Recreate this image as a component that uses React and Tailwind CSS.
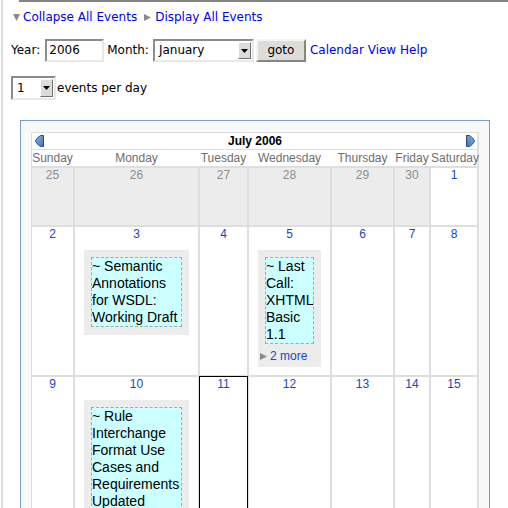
import React from 'react'

const sans = "font-['Liberation_Sans',Arial,sans-serif]"
const deja = "font-['DejaVu_Sans',Verdana,sans-serif]"

const colWidths = 'grid-cols-[41px_123px_47px_81px_61px_34px_46px]'
const dayNames = ['Sunday', 'Monday', 'Tuesday', 'Wednesday', 'Thursday', 'Friday', 'Saturday']

const weeks = [
  {
    height: 'h-[57px]',
    days: [
      { n: 25, other: true },
      { n: 26, other: true },
      { n: 27, other: true },
      { n: 28, other: true },
      { n: 29, other: true },
      { n: 30, other: true },
      { n: 1 },
    ],
  },
  {
    height: 'h-[148px]',
    days: [
      { n: 2 },
      { n: 3, events: ['~ Semantic Annotations for WSDL: Working Draft'] },
      { n: 4 },
      { n: 5, events: ['~ Last Call: XHTML Basic 1.1'], more: 2 },
      { n: 6 },
      { n: 7 },
      { n: 8 },
    ],
  },
  {
    height: 'h-[200px]',
    days: [
      { n: 9 },
      { n: 10, events: ['~ Rule Interchange Format Use Cases and Requirements Updated'] },
      { n: 11, today: true },
      { n: 12 },
      { n: 13 },
      { n: 14 },
      { n: 15 },
    ],
  },
]

function Tri({ dir = 'down', className = '' }) {
  const pts = dir === 'down' ? '0,0 7,0 3.5,7' : '0,0 7,3.5 0,7'
  return (
    <svg width="7" height="7" viewBox="0 0 7 7" className={className}>
      <polygon points={pts} fill="#8a8a8a" />
    </svg>
  )
}

function NavArrow({ right = false }) {
  return (
    <svg width="9" height="12" viewBox="0 0 9 12" className={right ? '-scale-x-100' : ''}>
      <defs>
        <linearGradient id="navg" x1="0" y1="0" x2="1" y2="1">
          <stop offset="0" stopColor="#8fb6e6" />
          <stop offset="1" stopColor="#3f70b3" />
        </linearGradient>
      </defs>
      <path d="M8.5 0.5 V11.5 H5.5 Q1.5 9 0.5 6 Q1.5 3 5.5 0.5 Z" fill="url(#navg)" stroke="#1f4c88" />
    </svg>
  )
}

function Select({ value, className = '' }) {
  return (
    <div
      className={`flex items-stretch bg-white border-2 border-t-[#8c8c8c] border-l-[#8c8c8c] border-b-[#e8e8e8] border-r-[#e8e8e8] ${className}`}
    >
      <div className="flex-1 pl-[4px] flex items-center text-[12px] leading-[15px] text-black">{value}</div>
      <div className="w-[13px] my-[1px] mr-[1px] bg-[#dcdcdc] border border-t-white border-l-white border-b-[#707070] border-r-[#707070] flex items-center justify-center">
        <svg width="7" height="4" viewBox="0 0 7 4">
          <polygon points="0,0 7,0 3.5,4" fill="#000" />
        </svg>
      </div>
    </div>
  )
}

function EventBox({ text }) {
  return (
    <div className="mx-[7px] bg-[#ccffff] border border-dashed border-[#a8a8a8] text-[14px] leading-[17px] text-black">
      {text}
    </div>
  )
}

function DayCell({ day }) {
  const bg = day.other ? 'bg-[#ececec]' : 'bg-white'
  const num = day.other ? 'text-[#8c8c8c]' : 'text-[#1b46c2]'
  return (
    <div className={`${bg} ${day.today ? 'relative z-10 outline outline-black' : ''}`}>
      <div className={`text-center text-[12px] leading-[15px] ${num}`}>{day.n}</div>
      {day.events && (
        <div className={`mt-[8px] mx-[9px] bg-[#ececec] pt-[7px] ${day.more ? 'pb-[3px]' : 'pb-[8px]'}`}>
          {day.events.map((e) => (
            <EventBox key={e} text={e} />
          ))}
          {day.more && (
            <div className="mt-[5px] pl-[2px] flex items-center gap-[3px] text-[12px] leading-[15px] text-[#1b46c2]">
              <Tri dir="right" />
              <span>{day.more} more</span>
            </div>
          )}
        </div>
      )}
    </div>
  )
}

export default function App() {
  return (
    <div className={`w-[508px] h-[508px] overflow-hidden bg-white ${deja}`}>
      <div className="ml-[1px] h-full border-l-2 border-[#dcdcdc]">
        {/* top rule */}
        <div className="ml-[16px] h-[2px] bg-[#858585]" />

        <div className="pl-[10px] mt-[8px] flex items-center text-[12px] leading-[15px]">
          <Tri />
          <span className="ml-[3px] text-[#0000ee]">Collapse All Events</span>
          <Tri dir="right" className="ml-[7px]" />
          <span className="ml-[4px] text-[#0000ee]">Display All Events</span>
        </div>

        <div className="pl-[8px] mt-[14px] h-[23px] flex items-center text-[12px] leading-[15px] text-black">
          <span>Year:</span>
          <div className="ml-[5px] w-[59px] h-[23px] flex items-center pl-[2px] bg-white border-2 border-t-[#8c8c8c] border-l-[#8c8c8c] border-b-[#e8e8e8] border-r-[#e8e8e8]">
            2006
          </div>
          <span className="ml-[3px]">Month:</span>
          <Select value="January" className="ml-[4px] w-[101px] h-[23px]" />
          <div className="ml-[2px] w-[50px] h-[23px] flex items-center justify-center bg-[#dedcd8] border-2 border-t-[#f4f4f4] border-l-[#f4f4f4] border-b-[#858585] border-r-[#858585]">
            goto
          </div>
          <span className="ml-[4px] text-[#0000ee]">Calendar View Help</span>
        </div>

        <div className="pl-[8px] mt-[14px] h-[24px] flex items-center text-[12px] leading-[15px] text-black">
          <Select value="1" className="w-[45px] h-[24px]" />
          <span className="ml-[1px]">events per day</span>
        </div>

        {/* calendar box */}
        <div className={`ml-[17px] mt-[20px] w-[470px] border border-[#7b9ebd] bg-[#f6f8fa] pt-[11px] pl-[10px] pr-[10px] ${sans}`}>
          <div className="bg-[#dedede] pl-[1px] pt-[1px] pr-[2px] flex flex-col gap-[2px]">
            <div className="bg-white h-[16px] -mb-[1px] pl-[3px] pr-[2px] flex items-center">
              <NavArrow />
              <div className="flex-1 text-center text-[12px] leading-[16px] font-bold text-black">July 2006</div>
              <NavArrow right />
            </div>
            <div className={`grid ${colWidths} gap-x-[2px] bg-white h-[16px]`}>
              {dayNames.map((d) => (
                <div key={d} className="text-center whitespace-nowrap text-[12px] leading-[16px] text-[#6e6e6e]">
                  {d}
                </div>
              ))}
            </div>
            {weeks.map((w, i) => (
              <div key={i} className={`grid ${colWidths} gap-x-[2px] ${w.height}`}>
                {w.days.map((d) => (
                  <DayCell key={d.n} day={d} />
                ))}
              </div>
            ))}
          </div>
        </div>
      </div>
    </div>
  )
}
